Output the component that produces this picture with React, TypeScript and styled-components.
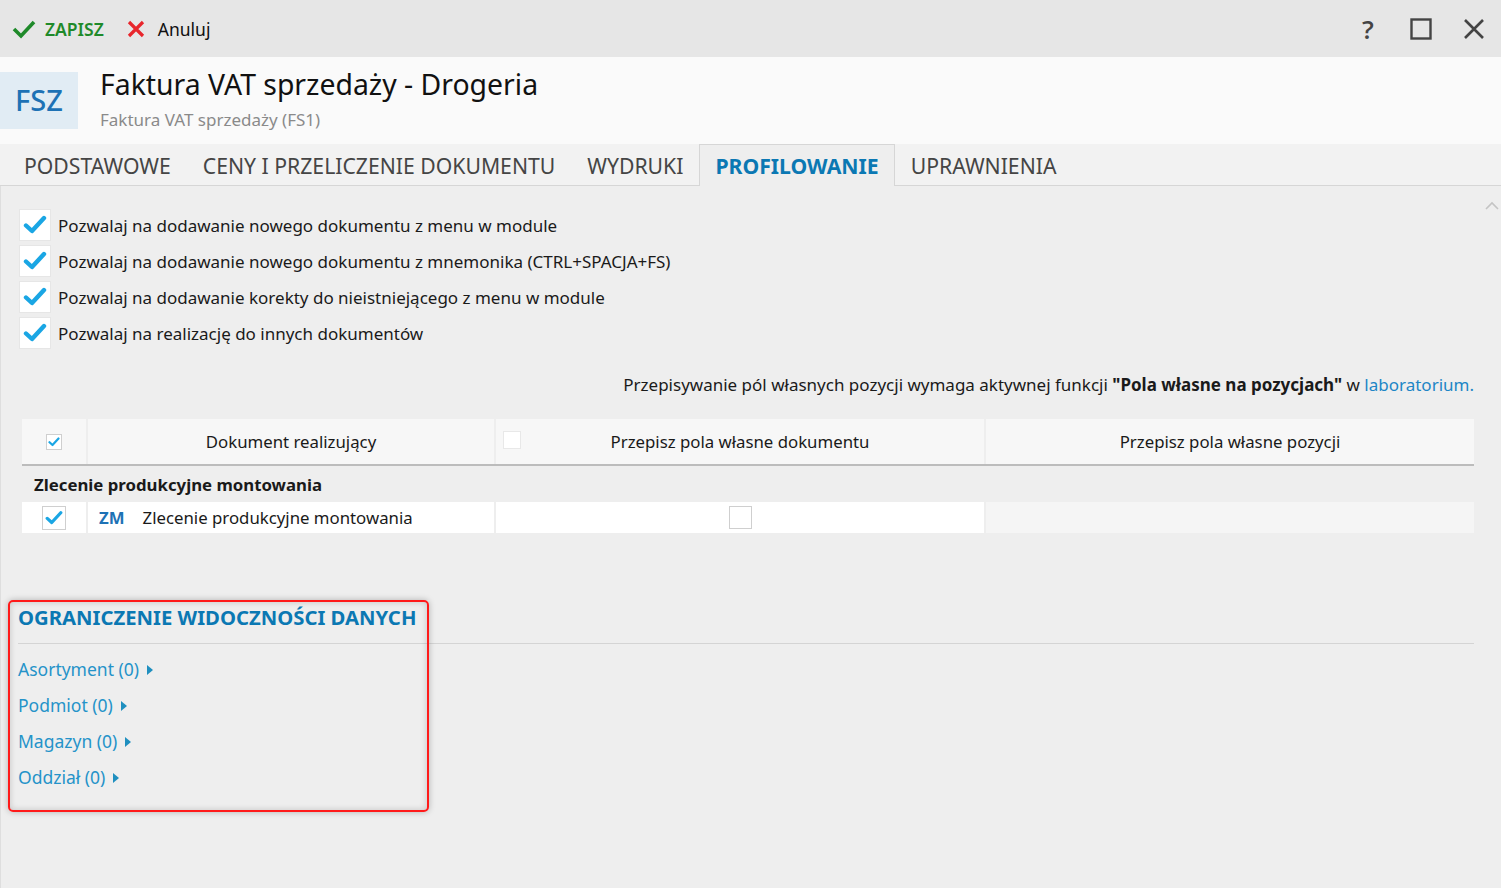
import React from "react";
import styled, { createGlobalStyle } from "styled-components";

const Global = createGlobalStyle`
  html, body { margin: 0; padding: 0; }
  body {
    width: 1501px; height: 888px; overflow: hidden;
    font-family: "Noto Sans", "Open Sans", sans-serif;
    background: #eeeeee; color: #1a1a1a;
  }
  * { box-sizing: border-box; }
`;

const Page = styled.div`
  width: 1501px; height: 888px; display: flex; flex-direction: column;
`;

const TopBar = styled.div`
  height: 57px; background: #e6e6e6; display: flex; align-items: center;
  padding: 0 14px 0 12px;
`;
const TopAction = styled.div<{ $color: string; $bold?: boolean }>`
  display: flex; align-items: center; gap: 9px; margin-right: 22px;
  color: ${p => p.$color}; font-size: 17.5px; font-weight: ${p => (p.$bold ? 600 : 400)};
`;
const Spacer = styled.div` flex: 1; `;
const WinBtn = styled.div`
  width: 26px; height: 26px; display: flex; align-items: center; justify-content: center;
  margin-left: 27px;
`;

const Header = styled.div`
  height: 87px; background: #fafafa; display: flex; align-items: flex-start; padding-top: 15px;
`;
const Badge = styled.div`
  width: 78px; height: 57px; background: #e1ecf4; color: #1e72b5;
  font-size: 29px; font-weight: 500; display: flex; align-items: center; justify-content: center;
  padding-bottom: 3px;
`;
const TitleBlock = styled.div`
  margin-left: 22px; display: flex; flex-direction: column; margin-top: -7px;
`;
const Title = styled.div` font-size: 28.4px; color: #111; line-height: 38px; `;
const Subtitle = styled.div` font-size: 17px; color: #8a8a8a; line-height: 22px; margin-top: 6px; `;

const Tabs = styled.div`
  height: 42px; background: #f2f2f2; display: flex; align-items: stretch;
  border-bottom: 1px solid #d6d6d6; padding-left: 8px;
`;
const Tab = styled.div<{ $active?: boolean }>`
  display: flex; align-items: center; padding: 0 15px; font-size: 21.2px;
  color: ${p => (p.$active ? "#0b78b3" : "#454545")};
  font-weight: ${p => (p.$active ? 700 : 400)};
  background: ${p => (p.$active ? "#eeeeee" : "transparent")};
  border: 1px solid ${p => (p.$active ? "#d6d6d6" : "transparent")};
  border-bottom: none; margin-bottom: ${p => (p.$active ? "-1px" : "0")};
`;

const Content = styled.div`
  flex: 1; position: relative; border-left: 1px solid #dedede;
  padding: 23px 27px 0 18px;
`;
const ScrollUp = styled.div`
  position: absolute; right: 2px; top: 7px;
`;

const CheckList = styled.div` display: flex; flex-direction: column; gap: 4px; `;
const CheckRow = styled.div` display: flex; align-items: center; gap: 7px; font-size: 17px; `;
const BigBox = styled.div`
  width: 32px; height: 32px; background: #fff; border: 1px solid #e6e6e6;
  display: flex; align-items: center; justify-content: center;
`;

const Info = styled.div`
  margin-top: 24px; text-align: right; font-size: 17px; line-height: 24px;
  b { font-weight: 700; }
`;
const Link = styled.span` color: #1d86c6; `;

const Table = styled.div` margin-top: 22px; margin-left: 3px; width: 1452px; `;
const Row = styled.div<{ $head?: boolean }>`
  display: grid; grid-template-columns: 64px 406px 488px 488px; column-gap: 2px;
  height: ${p => (p.$head ? "47px" : "31px")};
  border-bottom: ${p => (p.$head ? "2px solid #bcbcbc" : "none")};
`;
const Cell = styled.div<{ $bg: string; $align?: string }>`
  background: ${p => p.$bg}; display: flex; align-items: center;
  justify-content: ${p => p.$align || "center"}; position: relative; font-size: 16.8px;
`;
const GroupRow = styled.div`
  height: 36px; display: flex; align-items: center; padding-left: 12px;
  font-size: 16.8px; font-weight: 700;
`;
const SmallBox = styled.div<{ $size: number; $faded?: boolean }>`
  width: ${p => p.$size}px; height: ${p => p.$size}px; background: #fff;
  border: 1px solid ${p => (p.$faded ? "#e8e8e8" : "#cfcfcf")};
  display: flex; align-items: center; justify-content: center;
`;
const HeadBoxLeft = styled.div` position: absolute; left: 7px; top: 12px; `;
const Code = styled.span` color: #1e72b5; font-weight: 700; margin: 0 18px 0 11px; `;

const Section = styled.div` margin-top: 71px; position: relative; margin-left: -1px; `;
const SectionTitle = styled.div`
  color: #0b78b3; font-size: 20.3px; font-weight: 700; padding-bottom: 13px;
  border-bottom: 1px solid #d4d4d4; width: 1456px; line-height: 26px;
`;
const LinkList = styled.div` display: flex; flex-direction: column; gap: 9px; margin-top: 12px; `;
const SideLink = styled.div`
  color: #2593c9; font-size: 17.5px; display: flex; align-items: center; gap: 8px; line-height: 27px;
`;
const RedFrame = styled.div`
  position: absolute; left: -10px; top: -4px; width: 421px; height: 212px;
  border: 2px solid #ff1a1a; border-radius: 5px; pointer-events: none;
  box-shadow: 0 0 6px rgba(0,0,0,0.25), inset 0 0 6px rgba(0,0,0,0.18);
`;

const Tick = ({ size = 22 }: { size?: number }) => (
  <svg width={size} height={size} viewBox="0 0 24 24">
    <path d="M3 12.5 L9 18 L21 5" fill="none" stroke="#1aa6e4" strokeWidth="4.4" strokeLinecap="round" strokeLinejoin="round" />
  </svg>
);

const Arrow = () => (
  <svg width="6" height="10" viewBox="0 0 6 10"><path d="M0 0 L6 5 L0 10 Z" fill="#1f8fbf" /></svg>
);

const options = [
  "Pozwalaj na dodawanie nowego dokumentu z menu w module",
  "Pozwalaj na dodawanie nowego dokumentu z mnemonika (CTRL+SPACJA+FS)",
  "Pozwalaj na dodawanie korekty do nieistniejącego z menu w module",
  "Pozwalaj na realizację do innych dokumentów",
];

const links = ["Asortyment (0)", "Podmiot (0)", "Magazyn (0)", "Oddział (0)"];

export default function App() {
  return (
    <Page>
      <Global />
      <TopBar>
        <TopAction $color="#1f8a2a" $bold>
          <svg width="24" height="20" viewBox="0 0 24 20">
            <path d="M2 10 L9 17 L22 3" fill="none" stroke="#1f8a2a" strokeWidth="3.6" strokeLinejoin="miter" />
          </svg>
          ZAPISZ
        </TopAction>
        <TopAction $color="#111">
          <svg width="20" height="20" viewBox="0 0 20 20">
            <path d="M3 3 L17 17 M17 3 L3 17" stroke="#e8262c" strokeWidth="3.2" />
          </svg>
          <span style={{ marginLeft: 3 }}>Anuluj</span>
        </TopAction>
        <Spacer />
        <WinBtn>
          <span style={{ fontSize: 26, color: "#444", fontWeight: 600, fontFamily: "Open Sans, sans-serif" }}>?</span>
        </WinBtn>
        <WinBtn>
          <svg width="22" height="22" viewBox="0 0 22 22"><rect x="1.5" y="1.5" width="19" height="19" fill="none" stroke="#444" strokeWidth="2.4" /></svg>
        </WinBtn>
        <WinBtn>
          <svg width="22" height="22" viewBox="0 0 22 22"><path d="M2 2 L20 20 M20 2 L2 20" stroke="#444" strokeWidth="2.6" /></svg>
        </WinBtn>
      </TopBar>

      <Header>
        <Badge>FSZ</Badge>
        <TitleBlock>
          <Title>Faktura VAT sprzedaży - Drogeria</Title>
          <Subtitle>Faktura VAT sprzedaży (FS1)</Subtitle>
        </TitleBlock>
      </Header>

      <Tabs>
        <Tab>PODSTAWOWE</Tab>
        <Tab>CENY I PRZELICZENIE DOKUMENTU</Tab>
        <Tab>WYDRUKI</Tab>
        <Tab $active>PROFILOWANIE</Tab>
        <Tab>UPRAWNIENIA</Tab>
      </Tabs>

      <Content>
        <ScrollUp>
          <svg width="14" height="9" viewBox="0 0 14 9"><path d="M1 8 L7 2 L13 8" fill="none" stroke="#c4c4c4" strokeWidth="1.6" /></svg>
        </ScrollUp>
        <CheckList>
          {options.map(o => (
            <CheckRow key={o}>
              <BigBox><Tick size={24} /></BigBox>
              {o}
            </CheckRow>
          ))}
        </CheckList>

        <Info>
          Przepisywanie pól własnych pozycji wymaga aktywnej funkcji <b>"Pola własne na pozycjach"</b> w <Link>laboratorium.</Link>
        </Info>

        <Table>
          <Row $head>
            <Cell $bg="#f7f7f7">
              <SmallBox $size={16}><Tick size={12} /></SmallBox>
            </Cell>
            <Cell $bg="#f7f7f7">Dokument realizujący</Cell>
            <Cell $bg="#f7f7f7">
              <HeadBoxLeft><SmallBox $size={18} $faded /></HeadBoxLeft>
              Przepisz pola własne dokumentu
            </Cell>
            <Cell $bg="#f7f7f7">Przepisz pola własne pozycji</Cell>
          </Row>
          <GroupRow>Zlecenie produkcyjne montowania</GroupRow>
          <Row>
            <Cell $bg="#ffffff">
              <SmallBox $size={24}><Tick size={18} /></SmallBox>
            </Cell>
            <Cell $bg="#ffffff" $align="flex-start">
              <Code>ZM</Code>Zlecenie produkcyjne montowania
            </Cell>
            <Cell $bg="#ffffff"><SmallBox $size={23} /></Cell>
            <Cell $bg="#f5f5f5" />
          </Row>
        </Table>

        <Section>
          <SectionTitle>OGRANICZENIE WIDOCZNOŚCI DANYCH</SectionTitle>
          <LinkList>
            {links.map(l => (
              <SideLink key={l}>{l}<Arrow /></SideLink>
            ))}
          </LinkList>
          <RedFrame />
        </Section>
      </Content>
    </Page>
  );
}
